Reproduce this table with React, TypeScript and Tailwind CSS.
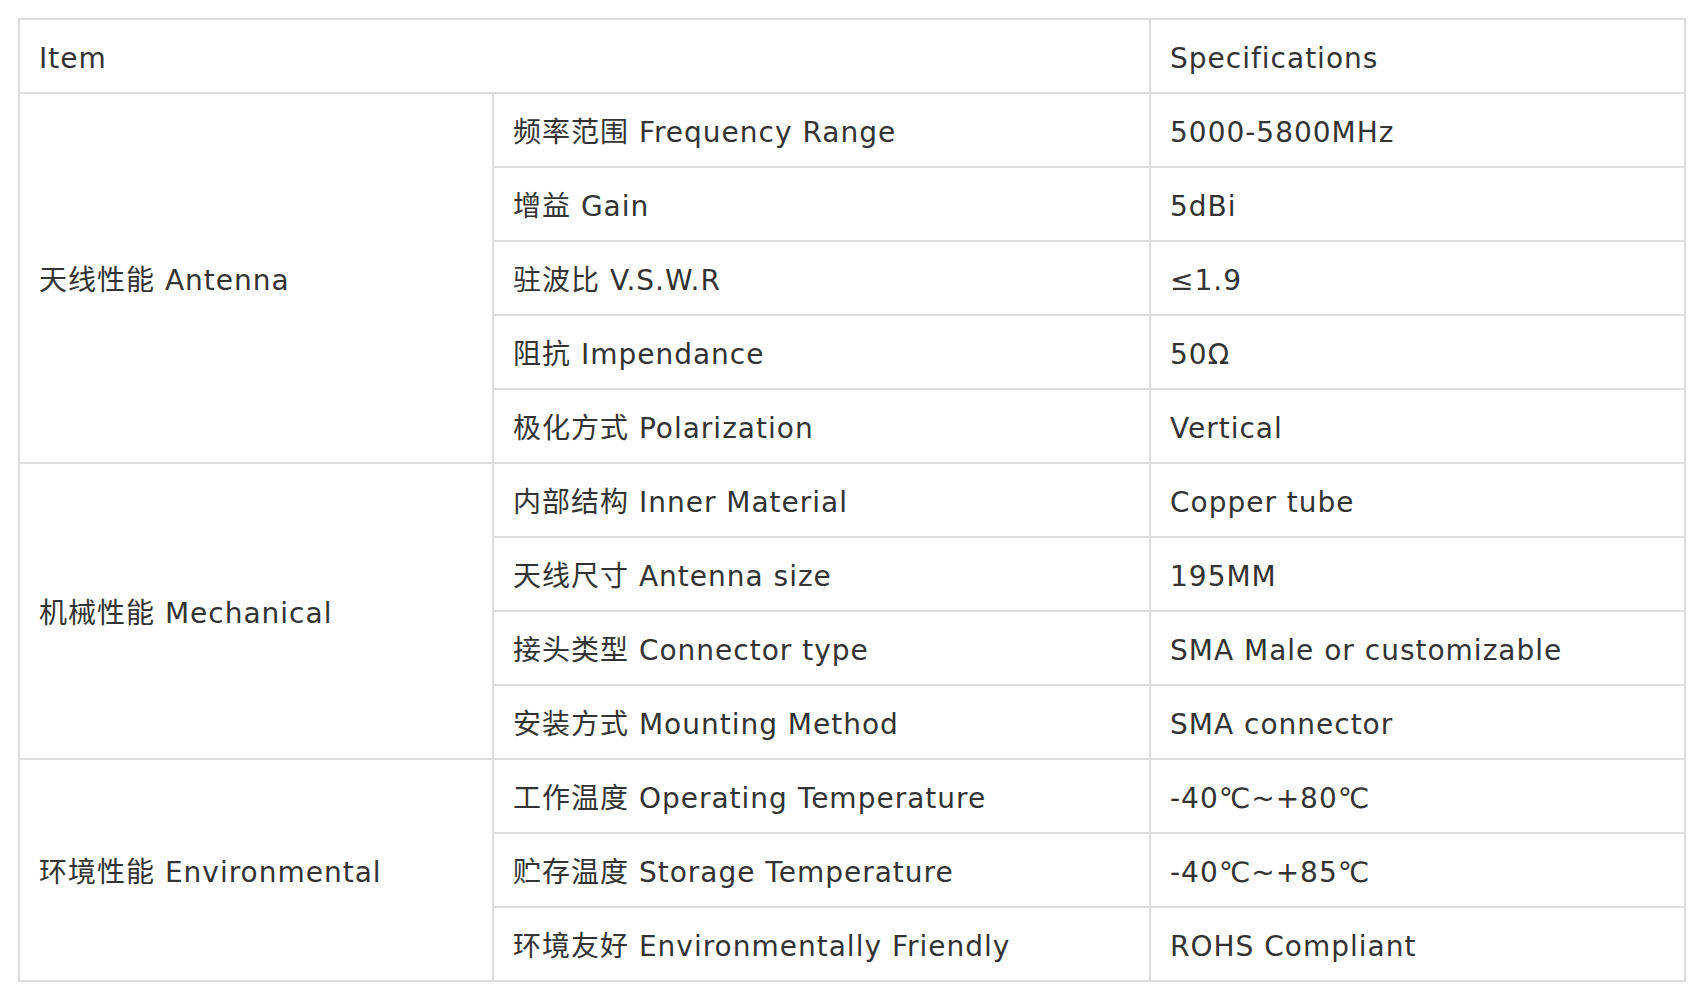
const groups = [
  {
    name: '天线性能 Antenna',
    rows: [
      ['频率范围 Frequency Range', '5000-5800MHz'],
      ['增益 Gain', '5dBi'],
      ['驻波比 V.S.W.R', '≤1.9'],
      ['阻抗 Impendance', '50Ω'],
      ['极化方式 Polarization', 'Vertical'],
    ],
  },
  {
    name: '机械性能 Mechanical',
    rows: [
      ['内部结构 Inner Material', 'Copper tube'],
      ['天线尺寸 Antenna size', '195MM'],
      ['接头类型 Connector type', 'SMA Male or customizable'],
      ['安装方式 Mounting Method', 'SMA connector'],
    ],
  },
  {
    name: '环境性能 Environmental',
    rows: [
      ['工作温度 Operating Temperature', '-40℃~+80℃'],
      ['贮存温度 Storage Temperature', '-40℃~+85℃'],
      ['环境友好 Environmentally Friendly', 'ROHS Compliant'],
    ],
  },
];

const spans: Record<number, string> = {
  5: 'row-span-5',
  4: 'row-span-4',
  3: 'row-span-3',
};

const cell = 'bg-white flex items-center px-[19px] pt-[6px] min-h-[72px]';

export default function App() {
  return (
    <div className="min-h-screen bg-white p-[18px] font-['DejaVu_Sans','Noto_Sans_CJK_SC',sans-serif] text-[28px] tracking-[1px] text-[#333]">
      <div className="grid grid-cols-[472px_655px_533px] gap-[2px] border-2 border-[#ddd] bg-[#ddd] w-fit">
        <div className={`${cell} col-span-2`}>Item</div>
        <div className={cell}>Specifications</div>
        {groups.map((g) => [
          <div key={g.name} className={`${cell} ${spans[g.rows.length]}`}>
            {g.name}
          </div>,
          ...g.rows.flatMap(([label, value]) => [
            <div key={label} className={cell}>{label}</div>,
            <div key={label + '-v'} className={cell}>{value}</div>,
          ]),
        ])}
      </div>
    </div>
  );
}
